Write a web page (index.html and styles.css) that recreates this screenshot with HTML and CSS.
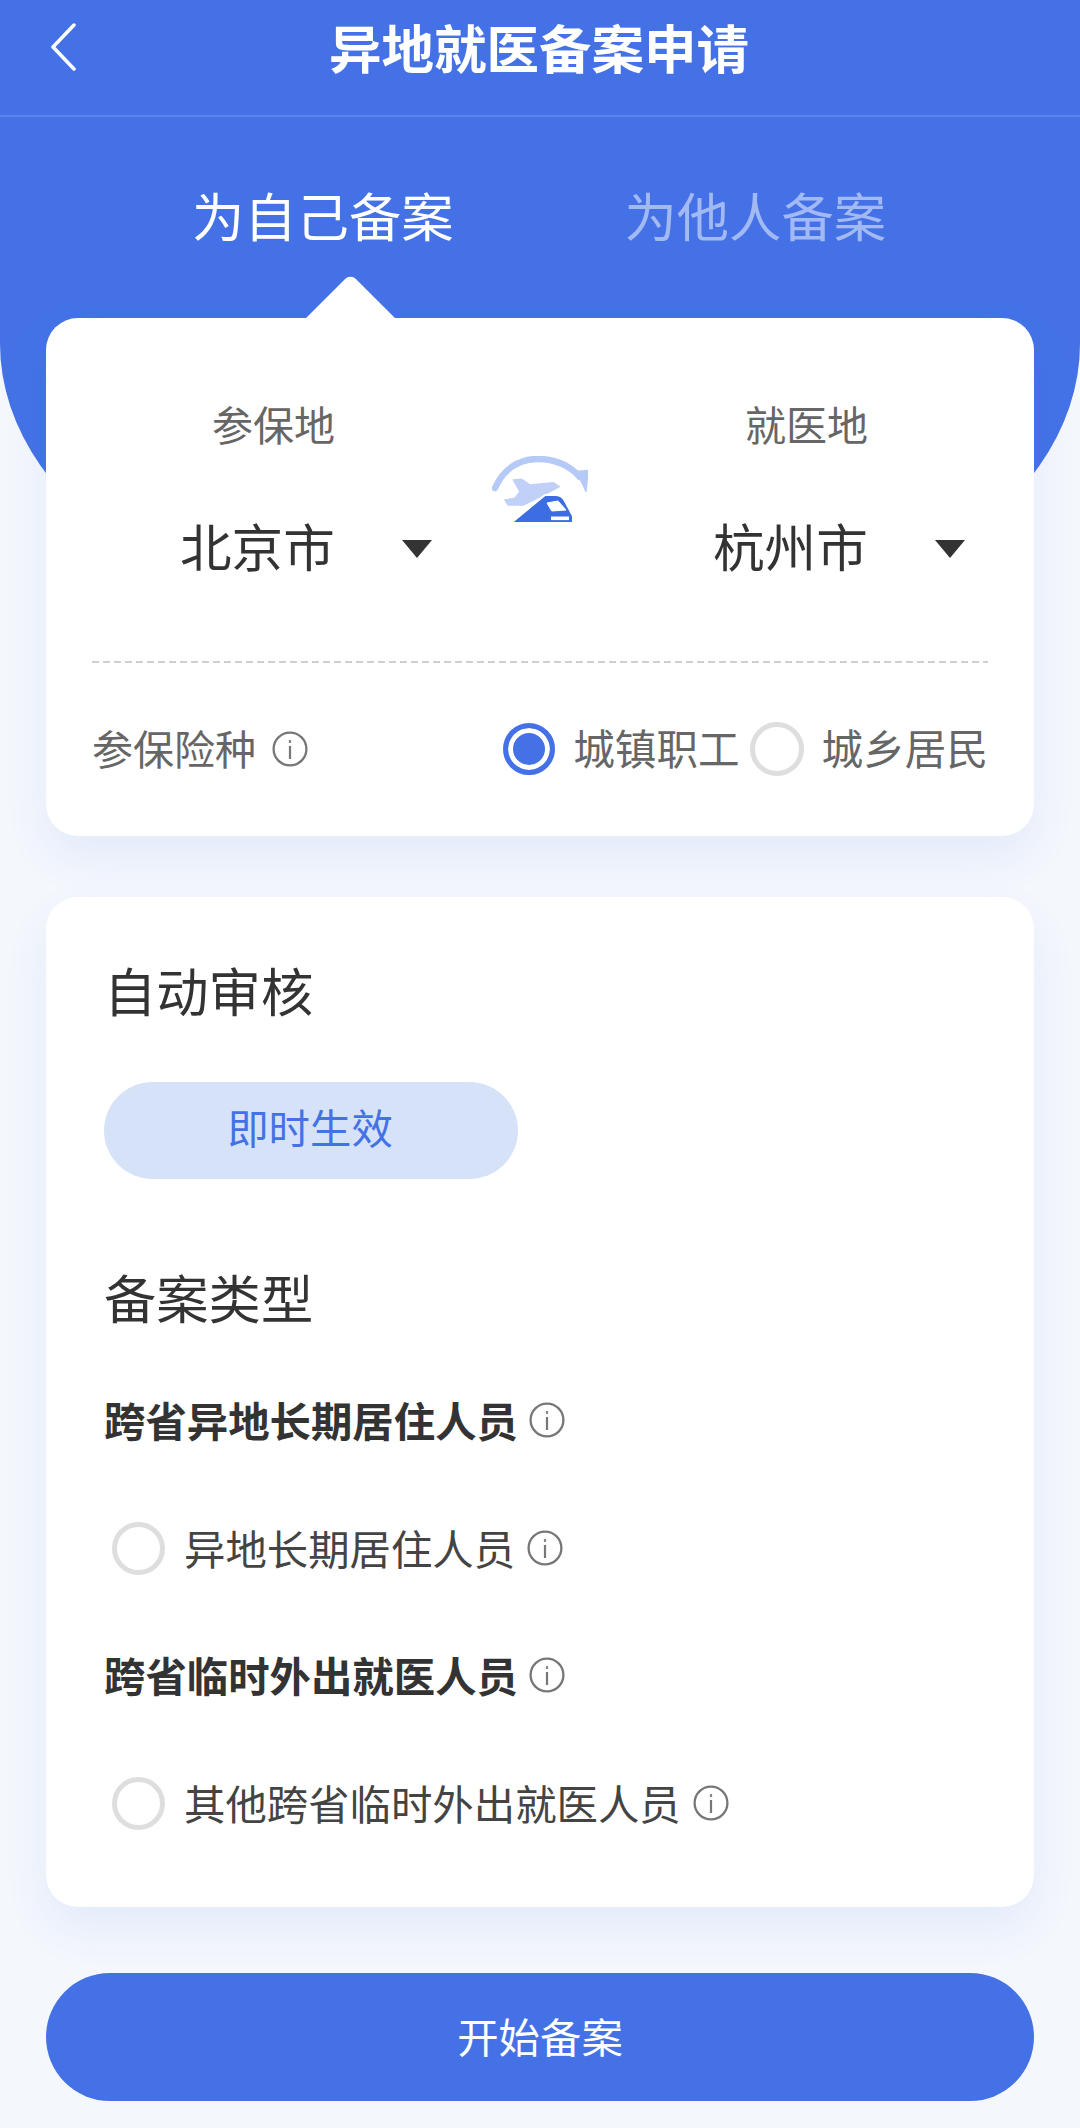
FILE: index.html
```html
<!DOCTYPE html>
<html lang="zh-CN">
<head>
<meta charset="utf-8">
<title>异地就医备案申请</title>
<link rel="stylesheet" href="styles.css">
</head>
<body>
<svg class="defs" width="0" height="0" aria-hidden="true">
  <symbol id="info" viewBox="0 0 36 36">
    <circle cx="18" cy="18" r="16.4" fill="none" stroke="#777" stroke-width="2.3"/>
    <rect x="16.9" y="15" width="2.2" height="13" fill="#777"/>
    <rect x="16.9" y="9" width="2.2" height="3" fill="#888"/>
  </symbol>
</svg>
<main class="page">
  <div class="hero-bg"></div>
  <header class="nav">
    <svg class="back" width="26" height="48" viewBox="0 0 26 48"><path d="M24 2 3 24l21 22" fill="none" stroke="#fff" stroke-width="3.5" stroke-linecap="round" stroke-linejoin="round"/></svg>
    <h1 class="nav-title">异地就医备案申请</h1>
  </header>
  <nav class="tabs">
    <span class="tab tab-active">为自己备案</span>
    <span class="tab tab-idle">为他人备案</span>
  </nav>

  <section class="card card-route">
    <div class="route">
      <div class="city">
        <div class="city-label">参保地</div>
        <div class="city-select"><span class="city-name">北京市</span><i class="caret"></i></div>
      </div>
      <div class="route-icon">
        <svg width="96" height="68" viewBox="0 0 96 68">
          <path d="M3 32C12 12 28 3 46 3c17 0 31 6 42 18" fill="none" stroke="#b6caf8" stroke-width="6.5" stroke-linecap="round"/>
          <path d="M85 15.5 96 14.5 94 35.5Z" fill="#b6caf8" stroke="#b6caf8" stroke-width="1.5" stroke-linejoin="round"/>
          <path d="M21.3 24 29.7 23.3 38 29 61.3 26.7 67.3 30.7 58 35.7 44.7 42.3 31.3 49H16.3L13 44 23 42.3 28 35.7Z" fill="#c0d0f7" stroke="#c0d0f7" stroke-width="1.5" stroke-linejoin="round"/>
          <path d="M19 67 53 39H63Q70 39 73 45L81 60V67Z" fill="#3d6de2" stroke="#fff" stroke-width="2" stroke-linejoin="round"/>
          <path d="M55 47 66 45 74 54 59.7 55Z" fill="#fff" stroke="#fff" stroke-linejoin="round"/>
          <rect x="59" y="60.5" width="18" height="3.6" fill="#fff"/>
        </svg>
      </div>
      <div class="city">
        <div class="city-label">就医地</div>
        <div class="city-select"><span class="city-name">杭州市</span><i class="caret"></i></div>
      </div>
    </div>
    <div class="dash"></div>
    <div class="kind-row">
      <span class="kind-label">参保险种</span>
      <svg class="info kind-info"><use href="#info"/></svg>
      <span class="kind-options">
        <i class="radio radio-on"></i><span class="kind-text">城镇职工</span>
        <i class="radio radio-second"></i><span class="kind-text">城乡居民</span>
      </span>
    </div>
  </section>

  <section class="card card-form">
    <h2 class="section-title">自动审核</h2>
    <div class="pill">即时生效</div>
    <h2 class="section-title section-type">备案类型</h2>
    <div class="group-title"><span class="lift">跨省异地长期居住人员</span><svg class="info group-info"><use href="#info"/></svg></div>
    <div class="option"><i class="radio"></i><span class="lift">异地长期居住人员</span><svg class="info option-info"><use href="#info"/></svg></div>
    <div class="group-title group-next"><span class="lift">跨省临时外出就医人员</span><svg class="info group-info"><use href="#info"/></svg></div>
    <div class="option"><i class="radio"></i><span class="lift">其他跨省临时外出就医人员</span><svg class="info option-info"><use href="#info"/></svg></div>
  </section>

  <button class="submit" type="button">开始备案</button>
</main>
</body>
</html>
```

FILE: styles.css
```css
* { box-sizing: border-box; }
html, body { margin: 0; padding: 0; }
body {
  width: 1080px;
  height: 2128px;
  overflow: hidden;
  background: #f4f7fc;
  font-family: "Noto Sans CJK SC", "Noto Sans", sans-serif;
  color: #333;
}
.defs { position: absolute; }
.page { position: relative; height: 2128px; padding-bottom: 27px; z-index: 0; }
.hero-bg {
  position: absolute;
  z-index: -1;
  left: 0;
  top: 0;
  width: 1080px;
  height: 664px;
  background: #4472e6;
  border-radius: 0 0 540px 540px / 0 0 320px 320px;
}

.nav {
  display: flex;
  align-items: center;
  height: 117px;
  padding: 0 0 21px 50px;
  border-bottom: 2px solid rgba(255, 255, 255, 0.13);
}
.back { flex: none; }
.nav-title {
  margin: 0 0 2px 253px;
  font-size: 52.5px;
  line-height: 96px;
  font-weight: 700;
  color: #fff;
}

.tabs {
  display: flex;
  gap: 171px;
  margin-top: 62px;
  margin-bottom: 69px;
  padding-left: 192px;
}
.tab { font-size: 52.3px; line-height: 70px; }
.tab-active { color: #fff; }
.tab-idle { color: #a2b9f4; }

.card {
  position: relative;
  margin: 0 46px;
  background: #fff;
  border-radius: 32px;
  box-shadow: 0 22px 44px rgba(68, 114, 230, 0.09);
}
.card-route { padding: 80px 46px 57px; }
.card-route::before {
  content: "";
  position: absolute;
  left: 272px;
  top: -31px;
  width: 65px;
  height: 65px;
  background: #fff;
  border-radius: 8px 0 0 0;
  transform: rotate(45deg);
}
.route { display: flex; padding-left: 90px; }
.city { width: 250px; flex: none; }
.city-label {
  padding-left: 30px;
  font-size: 41px;
  line-height: 50px;
  color: #666;
}
.city-select {
  display: flex;
  align-items: center;
  justify-content: space-between;
  margin-top: 65px;
}
.city-name {
  margin: -3px 0 3px -2px;
  font-size: 51.6px;
  line-height: 70px;
  color: #333;
  white-space: nowrap;
}
.caret {
  flex: none;
  width: 0;
  height: 0;
  margin-top: 2px;
  border-left: 15px solid transparent;
  border-right: 15px solid transparent;
  border-top: 18px solid #333;
}
.route-icon { width: 283px; flex: none; padding: 58px 0 0 60px; }

.dash {
  margin-top: 78px;
  height: 2px;
  background: repeating-linear-gradient(90deg, #cfcfcf 0 7px, transparent 7px 11px);
}

.kind-row { display: flex; align-items: center; height: 60px; margin-top: 56px; }
.kind-label { margin-bottom: 4px; font-size: 41px; line-height: 56px; color: #666; }
.info { display: block; flex: none; width: 36px; height: 36px; }
.kind-info { margin-left: 16px; }
.kind-options { display: flex; align-items: center; margin-left: auto; }
.kind-text { margin-bottom: 4px; font-size: 41.6px; line-height: 56px; color: #666; }
.radio {
  display: block;
  flex: none;
  width: 53px;
  height: 53px;
  border: 5px solid #dedede;
  border-radius: 50%;
  background: #fff;
}
.radio-on {
  width: 52px;
  height: 52px;
  border-color: #4472e6;
  background: #4472e6;
  box-shadow: inset 0 0 0 5px #fff;
  margin-right: 18px;
}
.radio-second { width: 54px; height: 54px; margin: 0 18px 0 10px; }

.card-form { margin-top: 61px; padding: 57px 58px 74px; }
.section-title {
  margin: 0;
  font-size: 52.3px;
  line-height: 70px;
  font-weight: 400;
  color: #333;
}
.pill {
  width: 414px;
  height: 97px;
  margin-top: 58px;
  padding-right: 2px;
  border-radius: 49px;
  background: #d6e2f8;
  color: #4472e6;
  font-size: 41.4px;
  line-height: 89px;
  text-align: center;
}
.section-type { margin-top: 82px; }
.group-title {
  display: flex;
  align-items: center;
  height: 60px;
  margin-top: 59px;
  font-size: 41.4px;
  line-height: 56px;
  font-weight: 700;
  color: #333;
}
.lift { margin-bottom: 2px; }
.group-next { margin-top: 67px; }
.group-info { margin-left: 11px; }
.option {
  display: flex;
  align-items: center;
  height: 60px;
  margin-top: 68px;
  padding-left: 8px;
  font-size: 41.4px;
  line-height: 56px;
  color: #444;
}
.option .radio { margin-right: 19px; }
.option-info { margin-left: 12px; }

.submit {
  display: block;
  width: 988px;
  height: 128px;
  margin: 66px 46px 0;
  padding: 0 0 4px;
  border: 0;
  border-radius: 64px;
  background: #4472e6;
  color: #fff;
  font-family: inherit;
  font-size: 41.4px;
}
```
